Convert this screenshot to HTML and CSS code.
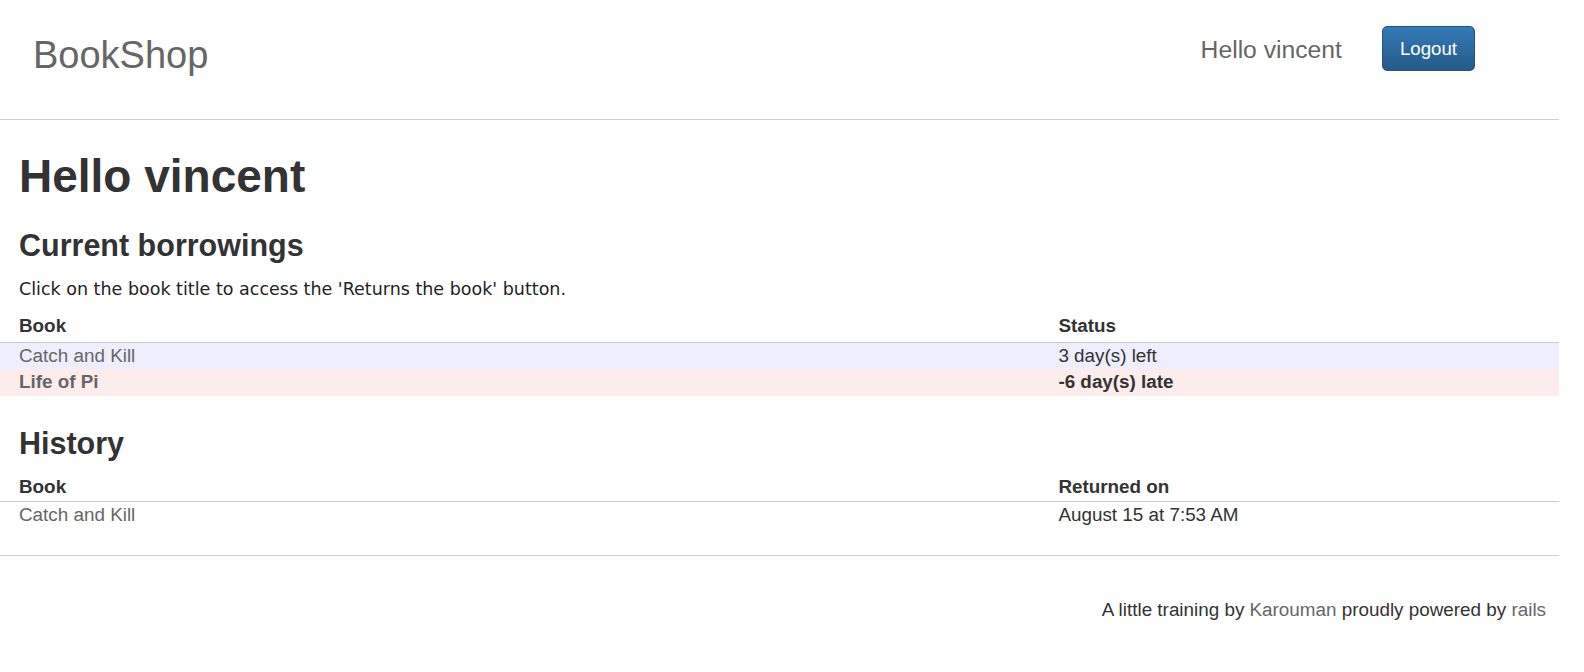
FILE: index.html
```html
<!DOCTYPE html>
<html lang="en">
<head>
<meta charset="utf-8">
<title>BookShop</title>
<link rel="stylesheet" href="styles.css">
</head>
<body>
<div class="page">
  <header class="navbar">
    <a class="brand" href="#">BookShop</a>
    <div class="nav-right">
      <span class="nav-text">Hello vincent</span>
      <button class="btn-primary" type="button">Logout</button>
    </div>
  </header>

  <main class="content">
    <h1 class="title">Hello vincent</h1>

    <h3 class="section-title">Current borrowings</h3>
    <p class="hint">Click on the book title to access the 'Returns the book' button.</p>
    <table class="list">
      <thead>
        <tr><th class="col-book">Book</th><th>Status</th></tr>
      </thead>
      <tbody>
        <tr class="row-ok"><td><a href="#">Catch and Kill</a></td><td>3 day(s) left</td></tr>
        <tr class="row-late"><td><a href="#">Life of Pi</a></td><td>-6 day(s) late</td></tr>
      </tbody>
    </table>

    <h3 class="section-title history">History</h3>
    <table class="list list-history">
      <thead>
        <tr><th class="col-book">Book</th><th>Returned on</th></tr>
      </thead>
      <tbody>
        <tr><td><a href="#">Catch and Kill</a></td><td>August 15 at 7:53 AM</td></tr>
      </tbody>
    </table>
  </main>

  <footer class="footer">
    <p class="footer-text">A little training by <a href="#">Karouman</a> proudly powered by <a href="#">rails</a></p>
  </footer>
</div>
</body>
</html>
```

FILE: styles.css
```css
html, body {
  margin: 0;
  padding: 0;
  background: #fff;
}

body {
  font-family: "Liberation Sans", Arial, Helvetica, sans-serif;
  font-size: 18.85px;
  line-height: 26.67px;
  color: #333;
}

a {
  color: #666;
  text-decoration: none;
}

.page {
  margin-right: 25px;
}

/* Navbar */
.navbar {
  display: flex;
  align-items: flex-start;
  border-bottom: 1px solid #cfcfcf;
  padding-right: 84px;
  box-sizing: border-box;
  height: 120px;
}

.brand {
  font-size: 38px;
  line-height: 38px;
  color: #666;
  margin-left: 33px;
  margin-top: 36px;
}

.nav-right {
  margin-left: auto;
  display: flex;
  align-items: flex-start;
}

.nav-text {
  font-size: 24.7px;
  line-height: 24.7px;
  color: #666;
  margin-top: 38px;
  margin-right: 40px;
}

.btn-primary {
  margin-top: 26px;
  font-family: "Liberation Sans", Arial, Helvetica, sans-serif;
  font-size: 18.67px;
  line-height: 27px;
  padding: 8px 17px;
  color: #fff;
  background: linear-gradient(to bottom, #337ab7 0%, #265a88 100%);
  border: 1px solid #245580;
  border-radius: 5px;
  cursor: pointer;
}

/* Content */
.content {
  padding-top: 33px;
}

.title {
  margin: 0;
  padding-left: 19px;
  font-size: 46px;
  line-height: 46px;
  font-weight: bold;
  color: #333;
}

.section-title {
  margin: 31px 0 0 0;
  padding-left: 19px;
  font-size: 30.5px;
  line-height: 30.5px;
  font-weight: bold;
  color: #333;
}

.section-title.history {
  margin-top: 32px;
}

.hint {
  margin: 20px 0 0 0;
  padding-left: 19px;
  font-family: "DejaVu Sans", Verdana, sans-serif;
  font-size: 17.5px;
  line-height: 17.5px;
  color: #222;
}

.list {
  width: 100%;
  border-collapse: collapse;
  margin-top: 14px;
}

.list th,
.list td {
  text-align: left;
  padding: 0 0 0 19px;
  line-height: 26.67px;
  vertical-align: top;
}

.list th {
  font-weight: bold;
  padding-top: 1px;
  padding-bottom: 2px;
  border-bottom: 1px solid #cbcbcb;
}

.list-history {
  margin-top: 13px;
}

.list-history th {
  padding-top: 2px;
  padding-bottom: 1px;
}

.list .col-book {
  width: 66.67%;
}

.row-ok {
  background: #eeeefc;
}

.row-late {
  background: #fdecec;
  font-weight: bold;
}

.row-late a {
  font-weight: bold;
}

/* Footer */
.footer {
  margin-top: 26px;
  border-top: 1px solid #cfcfcf;
  padding-top: 41px;
  padding-right: 13px;
}

.footer-text {
  margin: 0;
  text-align: right;
  color: #333;
}
```
